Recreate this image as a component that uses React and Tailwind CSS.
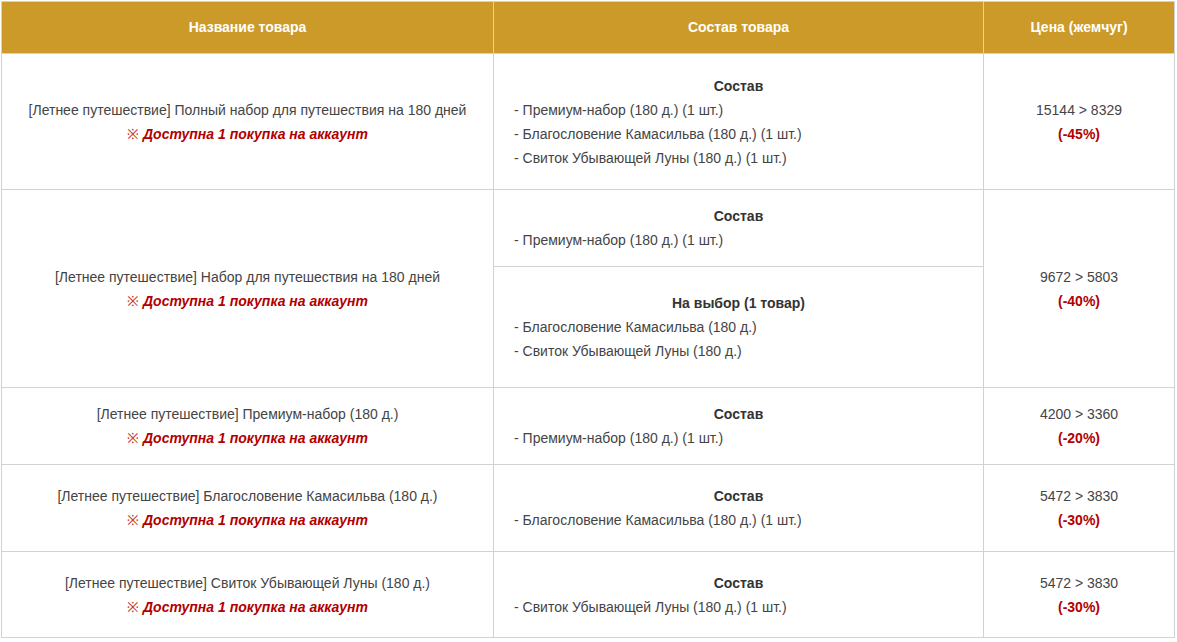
const note = (
  <div className="leading-6">
    <span className="text-[#c0392b] font-normal not-italic">※ </span>
    <span className="text-[#b30000] font-bold italic">Доступна 1 покупка на аккаунт</span>
  </div>
);

const rows = [
  {
    name: '[Летнее путешествие] Полный набор для путешествия на 180 дней',
    h: 'h-[136px]',
    title: 'Состав',
    items: ['Премиум-набор (180 д.) (1 шт.)', 'Благословение Камасильва (180 д.) (1 шт.)', 'Свиток Убывающей Луны (180 д.) (1 шт.)'],
    price: '15144 > 8329',
    off: '(-45%)',
  },
  {
    name: '[Летнее путешествие] Премиум-набор (180 д.)',
    h: 'h-[77px]',
    title: 'Состав',
    items: ['Премиум-набор (180 д.) (1 шт.)'],
    price: '4200 > 3360',
    off: '(-20%)',
  },
  {
    name: '[Летнее путешествие] Благословение Камасильва (180 д.)',
    h: 'h-[87px]',
    title: 'Состав',
    items: ['Благословение Камасильва (180 д.) (1 шт.)'],
    price: '5472 > 3830',
    off: '(-30%)',
  },
  {
    name: '[Летнее путешествие] Свиток Убывающей Луны (180 д.)',
    h: 'h-[86px]',
    title: 'Состав',
    items: ['Свиток Убывающей Луны (180 д.) (1 шт.)'],
    price: '5472 > 3830',
    off: '(-30%)',
  },
];

const cell = 'border border-[#d2d2d2] align-middle';

const Contents = ({ title, items }) => (
  <div className="px-5 leading-6">
    <div className="text-center font-bold text-[#333]">{title}</div>
    {items.map(item => <div key={item}>- {item}</div>)}
  </div>
);

const Price = ({ price, off }) => (
  <div className="text-center leading-6">
    <div>{price}</div>
    <div className="font-bold text-[#b30000]">{off}</div>
  </div>
);

const Name = ({ name }) => (
  <div className="text-center leading-6 px-4">
    <div>{name}</div>
    {note}
  </div>
);

export default function App() {
  const [first, ...rest] = rows;

  return (
    <div className="bg-white min-h-[642px] pl-px pt-px" style={{ fontFamily: '"Liberation Sans", Arial, sans-serif' }}>
      <table className="w-[1173px] table-fixed border-collapse text-[14px] text-[#444]">
        <colgroup>
          <col className="w-[492px]" />
          <col className="w-[490px]" />
          <col className="w-[191px]" />
        </colgroup>
        <thead>
          <tr className="bg-[#cc9a29] text-white font-bold">
            <th className={cell + ' h-[52px]'}>Название товара</th>
            <th className={cell}>Состав товара</th>
            <th className={cell}>Цена (жемчуг)</th>
          </tr>
        </thead>
        <tbody>
          <tr>
            <td className={cell + ' ' + first.h}><Name name={first.name} /></td>
            <td className={cell}><Contents title={first.title} items={first.items} /></td>
            <td className={cell}><Price price={first.price} off={first.off} /></td>
          </tr>
          <tr>
            <td rowSpan={2} className={cell}><Name name="[Летнее путешествие] Набор для путешествия на 180 дней" /></td>
            <td className={cell + ' h-[77px]'}><Contents title="Состав" items={['Премиум-набор (180 д.) (1 шт.)']} /></td>
            <td rowSpan={2} className={cell}><Price price="9672 > 5803" off="(-40%)" /></td>
          </tr>
          <tr>
            <td className={cell + ' h-[121px]'}>
              <Contents title="На выбор (1 товар)" items={['Благословение Камасильва (180 д.)', 'Свиток Убывающей Луны (180 д.)']} />
            </td>
          </tr>
          {rest.map(row => (
            <tr key={row.name}>
              <td className={cell + ' ' + row.h}><Name name={row.name} /></td>
              <td className={cell}><Contents title={row.title} items={row.items} /></td>
              <td className={cell}><Price price={row.price} off={row.off} /></td>
            </tr>
          ))}
        </tbody>
      </table>
    </div>
  );
}
